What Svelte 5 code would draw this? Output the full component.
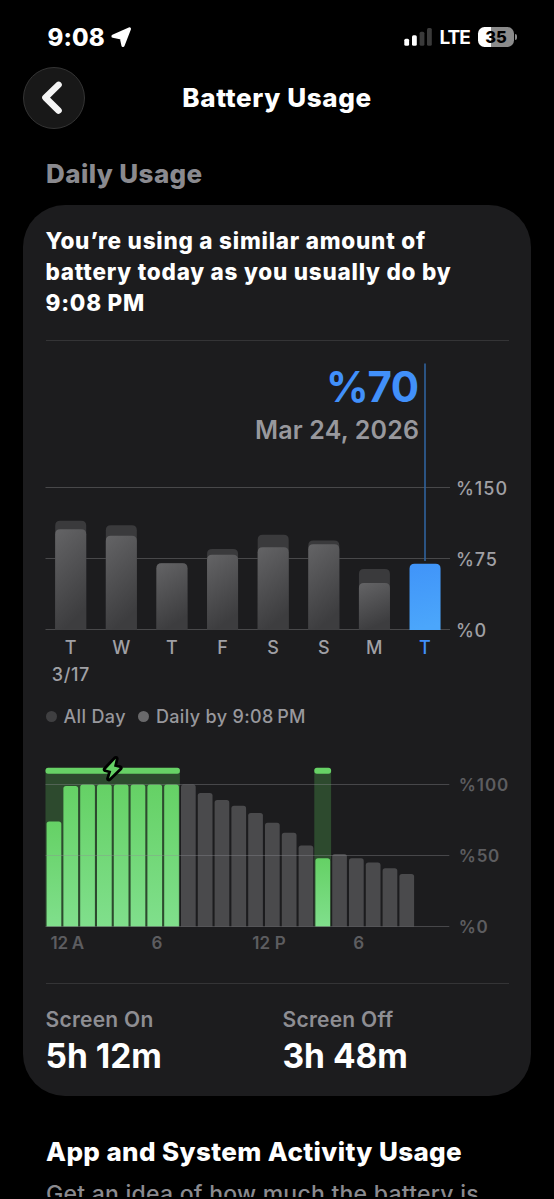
<script lang="ts">
    const days = [
        { label: 'T', total: 115, used: 106 },
        { label: 'W', total: 110, used: 99 },
        { label: 'T', total: 70, used: 70 },
        { label: 'F', total: 85, used: 79 },
        { label: 'S', total: 100, used: 87 },
        { label: 'S', total: 94, used: 90 },
        { label: 'M', total: 64, used: 49 },
        { label: 'T', total: 70, used: 70, today: true },
    ];

    // battery level per hour, in percent
    const levels = [74, 99, 100, 100, 100, 100, 100, 100, 100, 94, 89, 85, 80, 73, 66, 57, 48, 51, 48, 45, 41, 37];
    const charging = [
        { from: 0, to: 8 },
        { from: 16, to: 17 },
    ];
    const hourLabels = [
        { text: '12 A', x: 4.5, length: 33.5 },
        { text: '6', x: 105.4, length: 10.5 },
        { text: '12 P', x: 206.2, length: 33.5 },
        { text: '6', x: 307.2, length: 10.5 },
    ];

    const dayPitch = 50.62;
    const hourPitch = 16.8;

    const isCharging = (i: number) => charging.some((c) => i >= c.from && i < c.to);
    const dayHeight = (v: number) => (v / 150) * 142;
    const hourHeight = (v: number) => v * 1.42;

    // bar with rounded top corners only
    function bar(x: number, bottom: number, w: number, h: number, r: number) {
        return `M${x} ${bottom}v${r - h}q0 ${-r} ${r} ${-r}h${w - 2 * r}q${r} 0 ${r} ${r}v${h - r}z`;
    }
</script>

<div class="screen">
    <div class="status">
        <div class="status-left">
            <span class="time">9:08</span>
            <svg class="location" width="21" height="21" viewBox="0 0 21 21" aria-hidden="true">
                <path d="M18.4 2 12 18.4 10.4 10.9 2 9.2z" fill="#fff" stroke="#fff" stroke-width="3.2" stroke-linejoin="round" />
            </svg>
        </div>
        <div class="status-right">
            <svg class="signal" width="28" height="18" viewBox="0 0 28 18" aria-hidden="true">
                <rect x="0.3" y="10.7" width="4.8" height="7" rx="1.5" fill="#fff" />
                <rect x="8" y="7.3" width="4.8" height="10.4" rx="1.5" fill="#fff" />
                <rect x="15.6" y="3.7" width="4.8" height="14" rx="1.5" fill="#3a3a3a" />
                <rect x="23" y="0" width="4.8" height="17.7" rx="1.5" fill="#3a3a3a" />
            </svg>
            <span class="network">LTE</span>
            <span class="battery">35</span>
            <span class="battery-tip"></span>
        </div>
    </div>

    <header>
        <button class="back" aria-label="Back">
            <svg width="22" height="34" viewBox="0 0 22 34" aria-hidden="true">
                <path d="M17.6 3.8 4.4 16.6 17.6 29.6" fill="none" stroke="#f4f4f4" stroke-width="6.4" stroke-linecap="round" stroke-linejoin="round" />
            </svg>
        </button>
        <h1>Battery Usage</h1>
    </header>

    <h2 class="section">Daily Usage</h2>

    <section class="card">
        <p class="summary">You’re using a similar amount of<br />battery today as you usually do by<br />9:08 PM</p>
        <hr />

        <svg class="daily" width="463" height="346" viewBox="0 0 463 346">
            <defs>
                <linearGradient id="used" x1="0" y1="0" x2="0.3" y2="1">
                    <stop offset="0" stop-color="#646466" />
                    <stop offset="1" stop-color="#3d3d3f" />
                </linearGradient>
                <linearGradient id="today" x1="0" y1="0" x2="0.1" y2="1">
                    <stop offset="0" stop-color="#4094f9" />
                    <stop offset="1" stop-color="#4ba6fb" />
                </linearGradient>
            </defs>
            <text class="percent" x="373" y="60.5" text-anchor="end" textLength="93">%70</text>
            <text class="date" x="373" y="97.5" text-anchor="end" textLength="164">Mar 24, 2026</text>
            <g stroke="#48484a" stroke-width="1.2">
                <line x1="-0.5" x2="404" y1="146.5" y2="146.5" />
                <line x1="-0.5" x2="404" y1="217.5" y2="217.5" />
                <line x1="-0.5" x2="404" y1="288.5" y2="288.5" />
            </g>
            <text class="axis" x="410" y="153.5" textLength="51">%150</text>
            <text class="axis" x="410" y="224.5" textLength="41">%75</text>
            <text class="axis" x="410" y="295.5" textLength="30">%0</text>
            <line x1="379" x2="379" y1="22.5" y2="220" stroke="#30639d" stroke-width="1.6" />
            {#each days as day, i}
                {@const x = 9.2 + i * dayPitch}
                {#if day.today}
                    <path d={bar(x, 289, 31, dayHeight(day.used), 5)} fill="url(#today)" />
                {:else}
                    <path d={bar(x, 288.5, 31, dayHeight(day.total), 5)} fill="#3a3a3c" />
                    <path d={bar(x, 288.5, 31, dayHeight(day.used), 5)} fill="url(#used)" />
                {/if}
                <text class={['axis', day.today && 'active']} x={x + 15.4} y="313" text-anchor="middle">{day.label}</text>
            {/each}
            <text class="axis" x="5.8" y="339.5" textLength="37.5">3/17</text>
        </svg>

        <div class="legend">
            <i class="dot all"></i><span>All Day</span>
            <i class="dot by"></i><span>Daily by 9:08&#8201;PM</span>
        </div>

        <svg class="hourly" width="463" height="206" viewBox="0 0 463 206">
            <defs>
                <linearGradient id="charge" x1="0" y1="0" x2="0" y2="1">
                    <stop offset="0" stop-color="#65d165" />
                    <stop offset="1" stop-color="#80df8c" />
                </linearGradient>
            </defs>
            {#each charging as c}
                <rect x={c.from * hourPitch - 0.5} y="19" width={(c.to - c.from) * hourPitch} height="156.5" fill="#2d4a2e" />
                <rect x={c.from * hourPitch - 0.5} y="16.7" width={(c.to - c.from) * hourPitch} height="6" rx="2.6" fill="#67d266" />
            {/each}
            {#each levels as level, i}
                <path d={bar(0.6 + i * hourPitch, 175.5, 14.7, hourHeight(level), 2.6)} fill={isCharging(i) ? 'url(#charge)' : '#4a4a4c'} />
            {/each}
            <g stroke="#8e8e93" stroke-opacity="0.38" stroke-width="1.1">
                <line x1="-0.5" x2="403.3" y1="33.5" y2="33.5" />
                <line x1="-0.5" x2="403.3" y1="104.5" y2="104.5" />
                <line x1="-0.5" x2="403.3" y1="175.5" y2="175.5" />
            </g>
            <path class="bolt" d="M69.8 7.8 59.6 18.4 65.3 19.9 63 27.6 73.8 16.9 68 15.5z" />
            <text class="hour" x="412.8" y="40" textLength="49.5">%100</text>
            <text class="hour" x="412.8" y="111" textLength="40.5">%50</text>
            <text class="hour" x="412.8" y="182" textLength="29">%0</text>
            {#each hourLabels as label}
                <text class="hour" x={label.x} y="197.5" textLength={label.length}>{label.text}</text>
            {/each}
        </svg>

        <hr />
        <div class="totals">
            <div>
                <span class="name">Screen On</span>
                <strong>5h 12m</strong>
            </div>
            <div>
                <span class="name">Screen Off</span>
                <strong>3h 48m</strong>
            </div>
        </div>
    </section>

    <h2 class="activity">App and System Activity Usage</h2>
    <p class="hint">Get an idea of how much the battery is</p>
</div>

<style>
    :global(body) {
        margin: 0;
        background: #000;
    }
    .screen {
        box-sizing: border-box;
        width: 554px;
        height: 1197px;
        padding: 0 23px;
        overflow: hidden;
        background: #000;
        color: #fff;
        font-family: Inter, 'Liberation Sans', sans-serif;
        font-optical-sizing: none;
        white-space: nowrap;
    }
    h1, h2, p { margin: 0; }
    svg { display: block; flex: none; overflow: visible; }
    .status {
        display: flex;
        justify-content: space-between;
        align-items: center;
        height: 67px;
        padding: 7px 15px 0 24.5px;
        box-sizing: border-box;
    }
    .status-left, .status-right { display: flex; align-items: center; }
    .time { font-size: 24px; font-weight: 800; letter-spacing: 0.1px; }
    .location { margin-left: 6px; }
    .network { margin-left: 7px; font-size: 19px; font-weight: 700; letter-spacing: -0.9px; }
    .battery {
        width: 36px;
        height: 20px;
        margin-left: 8px;
        border-radius: 6.5px;
        background: linear-gradient(90deg, #fff 35%, #8b8b8b 35%);
        color: #000;
        font-size: 16.5px;
        font-weight: 800;
        line-height: 20px;
        text-align: center;
    }
    .battery-tip {
        width: 2px;
        height: 6px;
        margin-left: 1px;
        margin-right: -1px;
        border-radius: 0 2px 2px 0;
        background: #8b8b8b;
    }
    header {
        display: grid;
        grid-template-columns: 62px 1fr 62px;
        align-items: center;
        height: 62px;
    }
    .back {
        display: grid;
        place-items: center;
        width: 62px;
        height: 62px;
        padding: 0 5px 0 0;
        border: 1px solid #343434;
        border-radius: 50%;
        background: #181818;
    }
    h1 { font-size: 26px; font-weight: 800; line-height: 32px; text-align: center; letter-spacing: 0.62px; }
    .section { margin: 29px 0 15px 23px; color: #8a8a8f; font-size: 26px; font-weight: 800; line-height: 32px; letter-spacing: 0.4px; }
    .card {
        box-sizing: border-box;
        width: 508px;
        height: 891px;
        padding: 20px 22px 0 22.5px;
        border-radius: 42px;
        background: #1c1c1e;
    }
    .summary { font-size: 22.5px; font-weight: 800; line-height: 31px; letter-spacing: 0.77px; }
    hr { height: 1px; margin: 0; border: 0; background: #343436; }
    .summary + hr { margin-top: 22px; }
    .percent { fill: #4190fa; font-size: 42px; font-weight: 650; font-kerning: none; }
    .date { fill: #98989d; font-size: 25px; font-weight: 620; }
    .axis { fill: #a0a0a5; font-size: 18px; font-weight: 500; }
    .active { fill: #4190fa; }
    .hour { fill: #5d5d60; font-size: 17px; font-weight: 600; }
    .legend {
        display: flex;
        align-items: center;
        height: 24px;
        margin-top: 17px;
        color: #98989d;
        font-size: 18px;
        font-weight: 550;
        letter-spacing: 0.35px;
    }
    .dot { width: 11px; height: 11px; border-radius: 50%; }
    .all { background: #3f3f41; }
    .by { margin-left: 12px; background: #69696b; }
    .legend span { margin-left: 7px; }
    .hourly { margin-top: 23px; }
    .bolt { fill: #65d165; stroke: #000; stroke-width: 5.6px; stroke-linejoin: round; paint-order: stroke; }
    .hourly + hr { margin-top: 26px; }
    .totals { display: grid; grid-template-columns: 237px 1fr; margin-top: 22px; }
    .totals div { display: grid; }
    .name { color: #8e8e93; font-size: 21px; font-weight: 570; line-height: 28px; letter-spacing: 0.25px; }
    strong { font-size: 33.5px; font-weight: 670; line-height: 44px; }
    .activity { margin: 40px 0 0 23px; font-size: 26px; font-weight: 800; line-height: 32px; letter-spacing: 0.38px; }
    .hint { margin: 10px 0 0 23px; color: #8a8a8f; font-size: 23px; font-weight: 550; line-height: 32px; letter-spacing: 0.25px; }
</style>
